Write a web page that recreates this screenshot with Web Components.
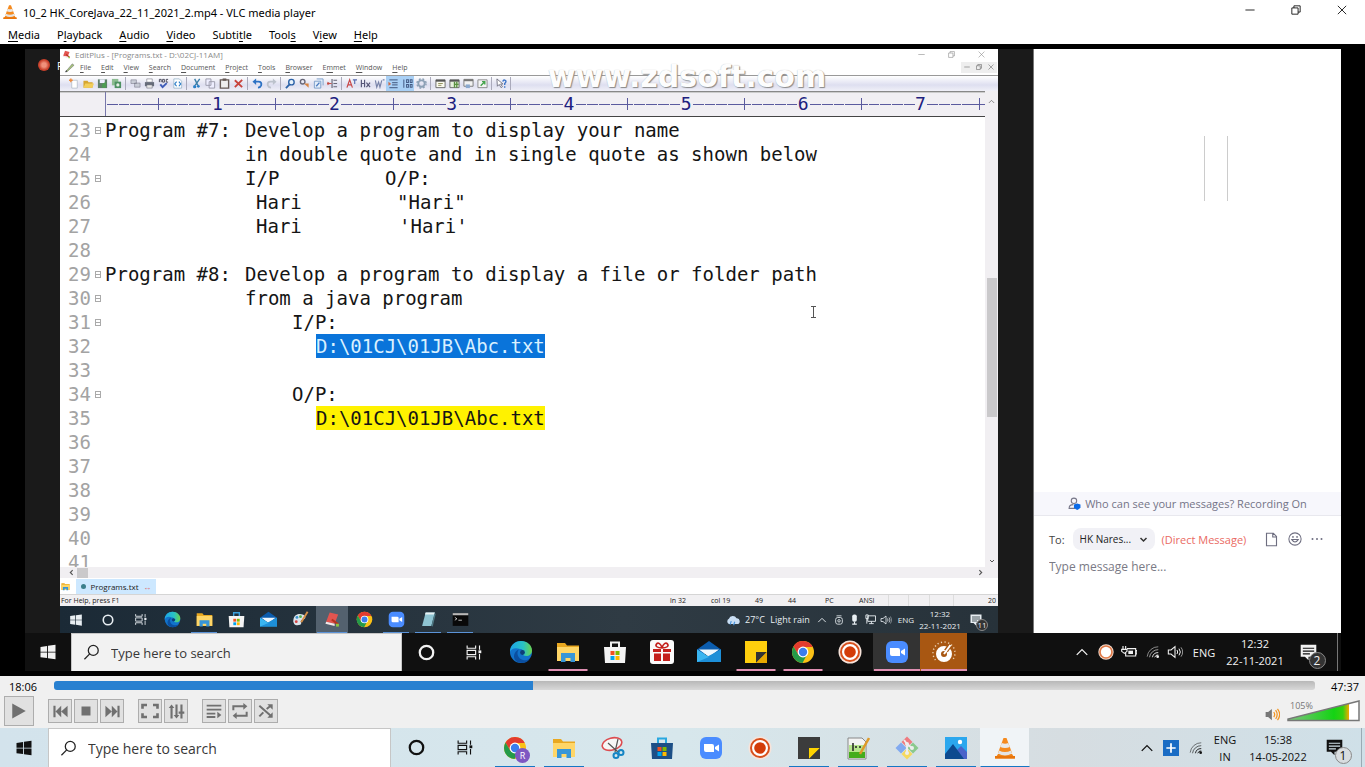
<!DOCTYPE html>
<html lang="en">
<head>
<meta charset="utf-8">
<title>10_2 HK_CoreJava_22_11_2021_2.mp4 - VLC media player</title>
<style>
html,body{margin:0;height:100%}
body{font-family:"Open Sans","Noto Sans",sans-serif;font-size:11px;color:#000;background:#fff;overflow:hidden}
</style>
</head>
<body>
<player-window></player-window>
<script>
const ICONS = {
cone:`<path d="M5 18h14l3 4.500H2z" fill="#f08418"/><path d="M5 17 10.500 2h3L19 17q-7 4-14 0z" fill="#f58a1e"/><path d="m8.800 7-1.600 4q5 2 9.600 0l-1.600-4q-3 1.500-6.400 0z" fill="#e9e9e9"/><path d="m6 14.500-1 3q7 4 14 0l-1-3q-6 3-12 0z" fill="#e4e4e4"/><path d="M2 20h20v2.500H2z" fill="#e8750c"/>`,
win:`<path d="M2 5.200 10.800 4v7.500H2zM12 3.800 22 2.400v9.100H12zM2 12.600h8.800v7.500L2 18.900zM12 12.600h10v9.100l-10-1.400z" fill="currentColor"/>`,
search:`<g fill="none" stroke="currentColor" stroke-width="1.800"><circle cx="14.500" cy="9" r="7"/><path d="M9.500 14 2 21.500"/></g>`,
ring:`<circle cx="12" cy="12" r="9.500" fill="none" stroke="currentColor" stroke-width="3.200"/>`,
task:`<g fill="none" stroke="currentColor" stroke-width="1.600"><path d="M3 2v4h12V2M3 22v-4h12v4M3 9h12v6H3zM20.500 2v6M20.500 14v8"/></g><path d="M19 9h4v4h-4z" fill="currentColor"/>`,
edge:`<defs><linearGradient id="a" x1="0" x2="1"><stop stop-color="#1ca4e8"/><stop offset=".6" stop-color="#29c3c4"/><stop offset="1" stop-color="#6cd34a"/></linearGradient></defs><circle cx="12" cy="12" r="11" fill="#1273cb"/><path d="M1 12C1 5 6 1 12 1s11 4 11 9.500c0 3.600-3 5.500-5.500 5.500-3 0-4-1-3.500-2.500.8-1.800.6-4.500-3-4.500C6 7 2 9 1 12z" fill="url(#a)"/><path d="M10 9.500c-3 3-1.500 9 4 10.500 2.500.7 5 0 7-1.500-3 5-9 5.500-13.500 3C3 18 5 11 10 9.500z" fill="#0b4fa0"/><circle cx="13.500" cy="12.500" r="2.400" fill="#0d3f78"/>`,
folder:`<path d="M1 3h8l2 2.500h12V21H1z" fill="#e9a820"/><path d="M1 7h22v14H1z" fill="#ffd667"/><path d="M5 13h14v9h-4.500v-4h-5v4H5z" fill="#3896d8"/>`,
store:`<path d="M8 7V2.500h8V7" fill="none" stroke="var(--store-h,#eee)" stroke-width="2"/><path d="M1 7h22l-1 16H2z" fill="var(--store,#f4f4f4)"/><path d="M7.500 11h4v4h-4z" fill="#f25022"/><path d="M12.500 11h4v4h-4z" fill="#7fba00"/><path d="M7.500 16h4v4h-4z" fill="#00a4ef"/><path d="M12.500 16h4v4h-4z" fill="#ffb900"/>`,
gift:`<rect x="0" y="0" width="24" height="24" rx="3" fill="#fafafa"/><path d="M3 9h8v3H3zM13 9h8v3h-8zM4 13.500h7V21H4zM13 13.500h7V21h-7z" fill="#c4201c"/><path d="M12 8C7 8 5 6 6.500 4S11 3.500 12 8c1-4.500 4-6 5.500-4S17 8 12 8z" fill="none" stroke="#c4201c" stroke-width="1.600"/>`,
mail:`<path d="M0 9.500 12 1l12 8.500V14H0z" fill="#0b5cad"/><path d="M2 9.500h20L12 17z" fill="#eef7fd"/><path d="M0 9.500 12 17l12-7.500V22H0z" fill="#29a5e6"/><path d="M24 9.500V22H0z" fill="#1d8fd8"/><path d="M0 9.500 12 17l-12 5z" fill="#3ab5f0"/>`,
note:`<path d="M1 1h22v22H1z" fill="var(--note,#ffcf0d)"/><path d="M12 12h11L12 23z" fill="var(--fold,#333)"/><path d="M23 12 12 23h11z" fill="var(--corner,#e8a800)"/>`,
chrome:`<circle cx="12" cy="12" r="11" fill="#fbc116"/><path d="M12 7h9.700A11 11 0 0 0 2.500 6.500L7.500 15z" fill="#e33b2e"/><path d="M2.500 6.500A11 11 0 0 0 11.500 23l4.500-8.500-8.500.5z" fill="#249a49"/><circle cx="12" cy="12" r="5.400" fill="#fff"/><circle cx="12" cy="12" r="4.200" fill="#3b7ded"/>`,
record:`<circle cx="12" cy="12" r="11.500" fill="#f7e3da"/><circle cx="12" cy="12" r="9" fill="#fff" stroke="#d8501c" stroke-width="2"/><circle cx="12" cy="12" r="5.800" fill="#d33c08"/>`,
recdot:`<circle cx="12" cy="12" r="11.500" fill="#f4ddd0"/><circle cx="12" cy="12" r="9" fill="#fff" stroke="#e07a48" stroke-width="2.500"/>`,
zoom:`<rect x="1" y="1" width="22" height="22" rx="6" fill="#4a8cff"/><path d="M5 8h8q2 0 2 2v6H7q-2 0-2-2zM16 11l4-2.500v7L16 13z" fill="#fff"/>`,
gauge:`<circle cx="12" cy="14" r="5.500" fill="none" stroke="#fff" stroke-width="5"/><path d="m14 11 4.500-6.500" stroke="#a85712" stroke-width="4.500"/><path d="m12 14 6.500-9" stroke="#fff" stroke-width="2"/><path d="M3.500 20A11 11 0 1 1 20.500 20" fill="none" stroke="#ecd3b6" stroke-width="1.400" stroke-dasharray="1.200 2.400"/>`,
snip:`<ellipse cx="11" cy="8" rx="10" ry="6" transform="rotate(-15 11 8)" fill="#f6f6f6" stroke="#dd4c50" stroke-width="1.600"/><path d="m7 7 10 9M17 3l-3 13" stroke="#555" stroke-width="1.200"/><g fill="none" stroke="#1585c4" stroke-width="2"><circle cx="15" cy="19.500" r="2.500"/><circle cx="20" cy="16.500" r="2.500"/></g>`,
notepp:`<path d="M2 2h14l4 4v17H2z" fill="#f3f3f3" stroke="#888"/><path d="M3 9h16v13H3z" fill="#b6e58c"/><path d="M3 16h16v6H3z" fill="#43ad1c"/><path d="M7 7v8M10 10v2M14 10v2" stroke="#222" stroke-width="1.500"/><path d="M23 2 14 18" stroke="#de9a29" stroke-width="2.500"/>`,
git:`<path d="m12 .5 5.500 5.500L12 11.500 6.500 6z" fill="#ef7b80"/><path d="M6 6.500 11.500 12 6 17.500.5 12z" fill="#82aaf0"/><path d="m18 6.500 5.500 5.500-5.500 5.500L12.500 12z" fill="#8bc98d"/><path d="m12 12.500 5.500 5.500-5.500 5.500L6.500 18z" fill="#f6d95f"/><path d="M9 4l3 4v9M12 8l5 4" stroke="#eee" stroke-width="2" fill="none"/><circle cx="12" cy="17" r="2" fill="#eee"/><circle cx="17" cy="12" r="2" fill="#eee"/><circle cx="12" cy="8" r="2" fill="#eee"/>`,
photos:`<path d="M1 1h22v22H1z" fill="#2ba7ee"/><path d="m12 15 5-5 6 6v7H12z" fill="#4a63c9"/><path d="m1 18 8-10 11 15H1z" fill="#0d4a8f"/><circle cx="16" cy="6" r="2.200" fill="#fff"/>`,
paint:`<path d="M2 12C3 5 10 3 15 5s5 6 1 7-4 2-3 5-8 5-10 1-1-4-1-6z" fill="#dbe3ea"/><circle cx="7" cy="9" r="2" fill="#3b94d1"/><circle cx="12" cy="8" r="2" fill="#4bae50"/><circle cx="6" cy="15" r="2" fill="#d74545"/><path d="m22 1-9 15" stroke="#d79047" stroke-width="2.600"/>`,
editplus:`<path d="M8 2 20 5l-5 13L3 15z" fill="#e25550"/><path d="m3 15 12 3v3L2 18z" fill="#f3e8e8"/><path d="m11 12 9 7" stroke="#b7321f" stroke-width="3"/><path d="M17 18h4v4h-4z" fill="#8cc63f"/>`,
notepad:`<path d="M8 2h13l-5 19H3z" fill="#8fc4d2"/><path d="M8 2h13l-1 3H7z" fill="#e9f2f4"/><path d="m16 21 5-19 1 3-4 17z" fill="#507b86"/>`,
cmd:`<path d="M1 3h22v18H1z" fill="#090909"/><path d="M1 3h22v3H1z" fill="#b9b9b9"/><path d="m4 9 3 2-3 2M9 13h5" stroke="#fff" fill="none"/>`,
up:`<path d="m3 17 9-9 9 9" fill="none" stroke="currentColor" stroke-width="2.200"/>`,
chev:`<path d="m4 8 8 8 8-8" fill="none" stroke="currentColor" stroke-width="4"/>`,
lt:`<path d="m16 4-8 8 8 8" fill="none" stroke="currentColor" stroke-width="4"/>`,
gt:`<path d="m8 4 8 8-8 8" fill="none" stroke="currentColor" stroke-width="4"/>`,
plus:`<path d="M0 0h24v24H0z" fill="#1a6cc4"/><path d="M12 5v14M5 12h14" stroke="#fff" stroke-width="2.600"/>`,
wifi:`<g fill="none" stroke="currentColor" stroke-width="1.500"><path d="M2 20A19 19 0 0 1 21 3" opacity=".6"/><path d="M6 21A15 15 0 0 1 21 8" opacity=".7"/><path d="M11 21a10 10 0 0 1 10-8"/><path d="M15 21a6 6 0 0 1 6-4"/></g><circle cx="20" cy="20" r="2.300" fill="currentColor"/>`,
vol:`<path d="M2 9h4l6-5v16l-6-5H2z" fill="none" stroke="currentColor" stroke-width="1.600"/><g fill="none" stroke="currentColor" stroke-width="1.500"><path d="M15 9q2 3 0 6M18 7q4 5 0 10"/><path d="M21 5q5 7 0 14" opacity=".6"/></g>`,
bat:`<path d="M9 7h13v11H7v-5M22 10h2v5h-2M3 3v5M7 3v5M1 8h8v3l-4 3-4-3z" fill="none" stroke="currentColor" stroke-width="1.700"/><path d="M11 10h7v5h-7z" fill="currentColor"/>`,
msg:`<path d="M1 1h22v17H12v5l-5-5H1z" fill="currentColor"/><path d="M4 6h16M4 10h16M4 14h10" stroke="var(--bar)" stroke-width="1.600"/>`,
cloud:`<path d="M5 19a5 5 0 0 1 0-9 7 7 0 0 1 13-1 5 5 0 0 1 1 10z" fill="#c9def4"/><path d="m9 14-2 6M15 15l-2 6" stroke="#4693de" stroke-width="2"/>`,
cam:`<rect x="4" y="6" width="16" height="16" rx="5" fill="none" stroke="currentColor" stroke-width="2"/><circle cx="12" cy="14" r="3" fill="none" stroke="currentColor" stroke-width="2"/><path d="M6 2h12" stroke="currentColor" stroke-width="2"/>`,
mic:`<rect x="7" y="1" width="10" height="16" rx="4" fill="currentColor"/><path d="M12 17v4M7 22h10" stroke="currentColor" stroke-width="2.500"/>`,
net:`<path d="M6 4h17v12H6zM14 16v5M9 21h10M2 2v8h5V2zM4 10v11" fill="none" stroke="currentColor" stroke-width="2"/>`,
play:`<path d="M3 2v20l18-10z" fill="currentColor"/>`,
prev:`<path d="M2 4h3v16H2zM13 4v16L5 12zM22 4v16l-9-8z" fill="currentColor"/>`,
next:`<path d="M19 4h3v16h-3zM11 4v16l8-8zM2 4v16l9-8z" fill="currentColor"/>`,
stop:`<path d="M3 3h18v18H3z" fill="currentColor"/>`,
full:`<path d="M2 9V4h6M16 4h6v5M22 15v5h-6M8 20H2v-5" fill="none" stroke="currentColor" stroke-width="3.500"/>`,
eq:`<path d="M5 6v16M12 2v16M19 2v20" stroke="currentColor" stroke-width="3"/><path d="M1 7h8L5 2zM8 17h8l-4 5zM15 12h8v3h-8z" fill="currentColor"/>`,
list:`<path d="M1 4h22M1 10h22M1 16h13M1 21h13" stroke="currentColor" stroke-width="2.800"/><path d="M17 13v10l6-5z" fill="currentColor"/>`,
loop:`<path d="M2 11V5h16M22 13v6H6" fill="none" stroke="currentColor" stroke-width="3"/><path d="M17 0v10l6-5zM7 14v10l-6-5z" fill="currentColor"/>`,
rand:`<path d="M2 4 20 20M2 20 8 14M13 9l6-5" stroke="currentColor" stroke-width="3"/><path d="M14 2h8v8zM22 14v8h-8z" fill="currentColor"/>`,
speaker:`<path d="M1 8h4l6-5v18l-6-5H1z" fill="#777"/><path d="M14 8q3 4 0 8M17 5q5 7 0 14M20 3q7 9 0 18" fill="none" stroke="#f29422" stroke-width="2"/>`,
min:`<path d="M1 12h22" stroke="currentColor" stroke-width="2"/>`,
max:`<path d="M2 7h15v15H2zM7 7V2h15v15h-5" fill="none" stroke="currentColor" stroke-width="2"/>`,
close:`<path d="m2 2 20 20M22 2 2 22" stroke="currentColor" stroke-width="2"/>`,
person:`<g fill="none" stroke="#777789" stroke-width="2"><circle cx="11" cy="7" r="5"/><path d="M13 21H2q0-7 8-7"/></g><path d="m17 12 6 2v5q-1 3-6 5-5-2-6-5v-5z" fill="#0b6be8"/>`,
file:`<path d="M4 2h11l5 5v15H4zM14 2v6h6" fill="none" stroke="#6e6e80" stroke-width="1.800"/>`,
smile:`<g fill="none" stroke="#6e6e80" stroke-width="1.800"><circle cx="12" cy="12" r="10.500"/><path d="M6.500 13q5.500 8 11 0z"/></g><circle cx="8.500" cy="8.500" r="1.500" fill="#6e6e80"/><circle cx="15.500" cy="8.500" r="1.500" fill="#6e6e80"/>`,
dots:`<g fill="#6e6e80"><circle cx="3" cy="12" r="2"/><circle cx="12" cy="12" r="2"/><circle cx="21" cy="12" r="2"/></g>`,
pencil:`<path d="M3 22 18 4l4 3L7 21z" fill="#a8c47a" stroke="#667"/><path d="m3 22 2-5 2 4z" fill="#444"/>`,
tNew:`<path d="M6 5h12v17H6z" fill="#fff" stroke="#89a"/><path d="M4 1v8M0 5h8" stroke="#f08a3c" stroke-width="3"/>`,
tOpen:`<path d="M1 6h9l2 3h9v12H1z" fill="#d6a631"/><path d="M5 12h19l-4 9H1z" fill="#f2ce5b"/>`,
tSave:`<path d="M2 3h20v19H2z" fill="#5f7f6a"/><path d="M6 3h11v8H6z" fill="#eef"/><path d="m11 13 9-5v13h-9z" fill="#4d9c54"/>`,
tSaves:`<path d="M2 2h14v14H2z" fill="#8cbd92"/><path d="M8 8h14v14H8z" fill="#4d9162"/><circle cx="15" cy="15" r="3.500" fill="#e4efe6"/>`,
tPrev:`<path d="M2 4h12v8H2zM10 11h12v9H10z" fill="#c8ccd6" stroke="#667"/>`,
tPrint:`<path d="M6 2h12v7H6z" fill="#fff" stroke="#556"/><path d="M2 9h20v9H2z" fill="#666c7a"/><path d="M6 15h12v7H6z" fill="#e8e8e8" stroke="#556"/>`,
tSpell:`<path d="M3 9V3h4v6M10 3h4v6h-4zM22 3h-4v6h4" fill="none" stroke="#445" stroke-width="2"/><path d="m5 14 5 6 9-9" fill="none" stroke="#3d5bb8" stroke-width="4"/>`,
tCode:`<path d="M4 2h12l5 5v15H4z" fill="#fff" stroke="#58a"/><path d="m10 8-4 5 4 5M15 8l4 5-4 5" fill="none" stroke="#2c7dc8" stroke-width="2.500"/>`,
tCut:`<path d="m8 2 7 14M19 2 9 16" stroke="#3a7ea8" stroke-width="3"/><circle cx="8" cy="19" r="3.500" fill="#2a7fc6"/><circle cx="16" cy="18" r="3" fill="#2a7fc6"/>`,
tCopy:`<path d="M2 2h11v14H2zM9 8h12v14H9z" fill="#eef" stroke="#99a" stroke-width="2"/>`,
tPaste:`<path d="M3 4h18v18H3z" fill="#eee" stroke="#665a55" stroke-width="3"/><path d="M8 1h8v5H8z" fill="#665a55"/>`,
tDel:`<path d="m4 5 16 15M20 4 4 20" stroke="#c8433c" stroke-width="4"/>`,
tUndo:`<path d="M6 8h8q8 0 6 8-2 5-7 5" fill="none" stroke="#2d72c4" stroke-width="4"/><path d="M1 8 9 1v14z" fill="#2d72c4"/>`,
tRedo:`<path d="M18 8h-8q-8 0-6 8 2 5 7 5" fill="none" stroke="#bcc2cc" stroke-width="4"/><path d="m23 8-8-7v14z" fill="#bcc2cc"/>`,
tFind:`<circle cx="14" cy="9" r="6" fill="#e6f1fb" stroke="#2c62a8" stroke-width="3"/><path d="m10 14-8 8" stroke="#2c62a8" stroke-width="4"/>`,
tRep:`<circle cx="8" cy="8" r="5" fill="none" stroke="#667" stroke-width="3"/><path d="m11 12 10 9v-9z" fill="#d88340"/>`,
tGoto:`<path d="M3 7h14v15H3zM8 2h14v14" fill="#e4eefa" stroke="#7a9cc8" stroke-width="2"/><path d="m7 18 7-8" stroke="#4b7ac0" stroke-width="3"/>`,
tCol:`<path d="M11 2v20M14 5h8M14 12h8M14 19h8" stroke="#667" stroke-width="2.500"/><path d="M1 8v8l7-4z" fill="#c64b44"/><path d="M0 12h10" stroke="#c64b44" stroke-width="2"/>`,
tFont:`<path d="M2 21 8 4l6 17M5 15h7" fill="none" stroke="#c84545" stroke-width="2.500"/><path d="M15 4h9M19 4v9" stroke="#566bb0" stroke-width="2.500"/>`,
tHex:`<path d="M3 4v16M10 4v16M3 12h7M14 10l8 10M22 10l-8 10" stroke="#557" stroke-width="2.500"/>`,
tWrap:`<path d="m3 5 3 15 4-11 3 11 4-15M19 4h4" fill="none" stroke="#7782a8" stroke-width="2.500"/>`,
tInd:`<path d="M3 4h18M9 10h12M9 15h12M3 21h18" stroke="#556f96" stroke-width="2.500"/><path d="M1 8v9l6-4z" fill="#cf6842"/>`,
tNum:`<path d="M4 3v18M10 4h4v6h-4zM18 4h4v6h-4zM10 14h4v6h-4zM18 14h4v6h-4z" fill="none" stroke="#445b85" stroke-width="2.200"/>`,
tGear:`<circle cx="12" cy="12" r="7" fill="none" stroke="#8ca0b5" stroke-width="4"/><circle cx="12" cy="12" r="10" fill="none" stroke="#8ca0b5" stroke-width="3" stroke-dasharray="4 4"/>`,
tWinA:`<path d="M2 4h20v17H2z" fill="#fafaf0" stroke="#666" stroke-width="2"/><path d="M2 4h20v4H2z" fill="#555"/><path d="M7 12h10M7 16h7" stroke="#8a8a55" stroke-width="2"/>`,
tWinB:`<path d="M2 4h20v17H2z" fill="#e5f1dc" stroke="#666" stroke-width="2"/><path d="M2 4h20v4H2z" fill="#555"/><path d="M12 8v13M17 8v13M13 14h8" stroke="#59913f" stroke-width="3"/>`,
tWinC:`<path d="M2 3h20v15H2z" fill="#f2f2f2" stroke="#777" stroke-width="2"/><path d="M2 3h20v4H2z" fill="#777"/><path d="M6 14h9v8H6z" fill="#8aa9cf"/>`,
tWinD:`<path d="M2 4h20v17H2z" fill="#f4f4f4" stroke="#888" stroke-width="2"/><path d="m8 17 9-9M17 14V8h-6" stroke="#43a34b" stroke-width="3" fill="none"/>`,
tHelp:`<path d="m2 2 1 16 4-4 4 7 3-2-4-6h5z" fill="#fff" stroke="#667" stroke-width="1.800"/><path d="M15 8q1-5 5-3t-1 7v3M19 18v3" fill="none" stroke="#3d74c7" stroke-width="3"/>`
};

class Base extends HTMLElement {
  constructor(){ super(); this.attachShadow({mode:"open"}); }
  connectedCallback(){ this.shadowRoot.innerHTML = `<style>*{box-sizing:border-box}button,input,select{font:inherit;color:inherit;margin:0;padding:0;border:0;background:none;outline:0}${this.css()}</style>${this.html()}`; }
  a(n,d=""){ return this.getAttribute(n) ?? d; }
}
const def = (n,c)=>customElements.define(n,c);

def("ui-icon", class extends Base {
  css(){ const s=this.a("size","16"); return `:host{display:block;flex:none;width:${s}px;height:${s}px}svg{display:block;width:100%;height:100%}`; }
  html(){ return `<svg viewBox="0 0 24 24" aria-hidden="true">${ICONS[this.a("name")]}</svg>`; }
});

/* Menu with underlined access keys: "_" precedes the key letter */
def("menu-bar", class extends Base {
  css(){ return `:host{display:block}nav{display:flex;align-items:center;gap:var(--menu-gap);height:100%}button{line-height:1;white-space:nowrap}u{text-underline-offset:2px}`; }
  html(){ return `<nav>${this.a("items").split(",").map(t=>`<button>${t.replace(/_(.)/,"<u>$1</u>")}</button>`).join("")}</nav>`; }
});

def("win-controls", class extends Base {
  css(){ return `:host{display:flex}button{width:var(--cw,46px);height:100%;display:grid;place-items:center}`; }
  html(){ const s=this.a("size","10"); return ["min","max","close"].map(n=>`<button aria-label="${n}"><ui-icon name="${n}" size="${s}"></ui-icon></button>`).join(""); }
});

def("task-item", class extends Base {
  css(){ const u=this.a("line"), w=this.a("w","48"); return `:host{display:block;flex:none;width:${w}px;height:100%}
button{width:100%;height:100%;display:grid;place-items:center;position:relative;background:${this.a("bg","none")}}
i{position:absolute;bottom:0;left:50%;height:var(--lh,2px);width:${u||0}px;transform:translateX(-50%);background:var(--line)}
b{position:absolute;right:9px;bottom:4px;width:15px;height:15px;border-radius:50%;background:#7e57c2;color:#fff;font:9px/15px "Open Sans",sans-serif;text-align:center}`; }
  html(){ return `<button aria-label="${this.a("icon")}"><ui-icon name="${this.a("icon")}" size="${this.a("size","24")}"></ui-icon>${this.a("badge")?`<b>${this.a("badge")}</b>`:""}<i></i></button>`; }
});

def("search-box", class extends Base {
  css(){ return `:host{display:block;flex:none}label{display:flex;align-items:center;gap:11px;height:100%;padding-left:11px;background:var(--sb);border:1px solid #c6c6c6;border-bottom:0}input{flex:1;min-width:0;font-size:var(--st,13px);color:#333}input::placeholder{color:#383838;opacity:1}ui-icon{color:#222}`; }
  html(){ return `<label><ui-icon name="search" size="17"></ui-icon><input aria-label="Search" placeholder="Type here to search"></label>`; }
});

def("tray-cell", class extends Base {
  css(){ return `:host{display:flex;flex:none;flex-direction:column;align-items:center;justify-content:center;width:${this.a("w")}px;height:100%;text-align:center;white-space:nowrap;line-height:var(--tl,17px);position:relative}`; }
  html(){ return `<slot></slot>`; }
});

def("note-badge", class extends Base {
  css(){ const s=+this.a("size","20"), b=+this.a("b","17"), f=this.a("f","12"); return `:host{display:block;position:relative;width:${s+8}px;height:${s}px}b{position:absolute;left:${Math.round(s/2)}px;top:${Math.round(s/2)-1}px;width:${b}px;height:${b}px;border-radius:50%;background:var(--bb);border:1px solid #888;font-weight:400;font-size:${f}px;line-height:${b-2}px;text-align:center}`; }
  html(){ return `<ui-icon name="msg" size="${this.a("size","20")}"></ui-icon><b>${this.a("n")}</b>`; }
});

def("code-line", class extends Base {
  css(){ return `:host{display:grid;grid-template-columns:45px 140px 140px 1fr;height:24px;line-height:24px;white-space:pre}
.n{color:#a3a3a3;padding-left:8px;display:flex;align-items:center;gap:4px}
.n i{width:6px;height:7px;border:1px solid #aaa;background:linear-gradient(#aaa,#aaa) center/100% 1px no-repeat;flex:none}
.t{overflow:visible;width:0}mark{color:inherit;background:#fff200;display:inline-block}mark.sel{background:#0a74da;color:#d9f0ff}`; }
  html(){
    const p=(this.a("cols")||"").split("|");
    return `<span class="n">${this.a("n")}${this.hasAttribute("fold")?"<i></i>":""}</span>`+p.map(c=>{
      const m=c.match(/^(\d*)(~|\^)?(.*)$/); const pad=m[1]||0;
      const tx=m[2]?`<mark class="${m[2]=="^"?"sel":""}">${m[3]}</mark>`:m[3];
      return `<span class="t" style="padding-left:${pad}px">${tx}</span>`;}).join("");
  }
});

def("ruler-bar", class extends Base {
  css(){ return `:host{display:flex;height:26px;background:#f1eff3;border-top:1px solid #888;border-bottom:1px solid #444;font:18px "DejaVu Sans Mono",monospace;color:#20207e;padding:0 0 0 45px;box-shadow:inset 0 1px #ccc}
ol{flex:1;margin:0;padding:0;list-style:none;display:flex;border-left:1px solid #77a}
li{flex:1 1 0;min-width:0;display:flex;justify-content:center;align-items:center;line-height:24px}
.d{background:linear-gradient(#5a5a9e,#5a5a9e) 1px 12px/calc(100% - 1px) 1px no-repeat}
.p{background:linear-gradient(#5a5a9e,#5a5a9e) 0 12px/100% 1px no-repeat,linear-gradient(#5a5a9e,#5a5a9e) center/1px 12px no-repeat}`; }
  html(){ let s=""; for(let i=1;i<=75;i++) s+= i%10==0?`<li>${i/10}</li>`:`<li class="${i%5?"d":"p"}"></li>`; return `<ol>${s}</ol>`; }
});

def("tool-strip", class extends Base {
  css(){ return `:host{display:flex;align-items:center;height:16px;padding-left:7px;background:linear-gradient(#fff,#dedff0 60%,#f0f0f8);border-top:1px solid #999}
button{width:14px;height:15px;display:grid;place-items:center;flex:none}button.on{background:#a9d0f5}hr{margin:0 2px;border:0;width:1px;height:13px;background:#aab;flex:none}`; }
  html(){ return "tNew tOpen tSave tSaves | tPrev tPrint tSpell tCode | tCut tCopy tPaste tDel | tUndo tRedo | tFind tRep tGoto tCol | tFont tHex tWrap *tInd *tNum tGear | tWinA tWinB tWinC tWinD | tHelp |".split(" ").map(n=>n=="|"?"<hr>":`<button class="${n[0]=="*"?"on":""}" aria-label="${n.replace(/\*?t/,"")}"><ui-icon name="${n.replace("*","")}" size="11"></ui-icon></button>`).join(""); }
});

def("code-editor", class extends Base {
  css(){ return `:host{display:flex;flex-direction:column;min-width:0;min-height:0;background:#fff;position:relative;overflow:hidden;font-size:8px;color:#555}
.title{display:flex;align-items:center;height:10px;gap:4px;padding-left:2px;color:#8a8a8a;flex:none}.title span{flex:1}
.title win-controls{--cw:30px;height:10px;margin-right:2px}
.menu{display:flex;align-items:center;height:16px;padding-left:4px;gap:5px;font-size:7px;color:#555;flex:none}
.menu menu-bar{flex:1;--menu-gap:10px}.menu win-controls{--cw:12px;background:#eee;height:11px;margin-right:1px}
tool-strip{flex:none}
.body{flex:1;min-height:0;display:grid;grid-template-columns:1fr 13px;grid-template-rows:auto minmax(0,1fr) 11px}
.code{overflow:hidden;font:19px/24px "DejaVu Sans Mono",monospace;color:#151515;padding-top:1px}
.vs{grid-column:2;grid-row:1/3;background:#f1eff2;display:flex;flex-direction:column;align-items:center;padding:7px 0 3px;color:#555}
.vs i{flex:none;width:10px;height:139px;margin:173px 0 auto;background:#cac9cb}
.hs{grid-column:1/3;background:#f1eff2;display:flex;align-items:center;justify-content:space-between;padding:0 14px 0 8px;color:#555}
.hs div{display:flex;align-items:center;gap:2px}.hs i{width:11px;height:10px;background:#cac9cb}
.tabs{height:16px;display:flex;align-items:center;gap:6px;padding-left:1px;flex:none}
.tabs button{height:15px;width:80px;background:#cde8ff;display:flex;align-items:center;justify-content:space-evenly;color:#222}.tabs em{color:#d66;font-style:normal}.tabs s{width:5px;height:5px;border-radius:50%;background:#3b7f8c;display:block}
.status{flex:none;height:12px;border-top:1px solid #d5d5d5;background:#f1f0f2;display:grid;grid-template-columns:1fr 41px 44px 33px 37px 34px 32px 20px 21px 24px 32px 12px;align-items:center;color:#222;font-size:7px;line-height:11px;padding-left:1px;white-space:nowrap}
.status span+span{padding-left:2px}.status .k{border-right:1px solid #ddd;height:100%}
.wm{position:absolute;left:52%;top:10px;font:bold 30px/35px "DejaVu Sans",sans-serif;color:#fdfdfd;text-shadow:1px 1px 1px #888,0 0 1px #bbb}
.cur{position:absolute;left:80%;top:257px;width:7px;height:12px}
.bar{flex:none;display:flex;align-items:center;height:27px;background:linear-gradient(90deg,#1b2a36,#2f3b44 60%,#27323a);color:#e8eef2;--line:#5b93d8;--lh:1px;--store:#f4f4f4;--store-h:#3aa0dd;--tl:12px;--bar:#27323a;--bb:#333;font-size:8px}
.tray{display:flex;margin-left:auto;height:100%;align-items:center}.wx{font-size:9px}`; }
  html(){
    const L=[[23,1,"Program #7:|Develop a program to display your name"],[24,0,"|in double quote and in single quote as shown below"],[25,1,"|I/P|O/P:"],[26,0,"|11Hari|12&quot;Hari&quot;"],[27,0,"|11Hari|14'Hari'"],[28,0,""],[29,1,"Program #8:|Develop a program to display a file or folder path"],[30,1,"|from a java program"],[31,1,"|47I/P:"],[32,0,"|71^D:\\01CJ\\01JB\\Abc.txt"],[33,0,""],[34,1,"|47O/P:"],[35,0,"|71~D:\\01CJ\\01JB\\Abc.txt"],[36,0,""],[37,0,""],[38,0,""],[39,0,""],[40,0,""],[41,0,""]];
    const apps=["win:","ring:","task:","edge:","folder:26","store:","mail:","paint:","editplus:30:#53616e","chrome:","zoom:26","notepad:26","cmd:26"];
    return `<div class="title"><ui-icon name="editplus" size="9"></ui-icon><span>EditPlus - [Programs.txt - D:\\02CJ-11AM]</span><win-controls size="7"></win-controls></div>
<div class="menu"><ui-icon name="pencil" size="11"></ui-icon><menu-bar items="_File,_Edit,_View,_Search,_Document,_Project,_Tools,_Browser,E_mmet,_Window,_Help"></menu-bar><win-controls size="6"></win-controls></div>
<tool-strip></tool-strip>
<div class="body"><ruler-bar></ruler-bar><div class="code">${L.map(l=>`<code-line n="${l[0]}" ${l[1]?"fold":""} cols="${l[2]}"></code-line>`).join("")}</div>
<div class="vs"><ui-icon name="up" size="7"></ui-icon><i></i><ui-icon name="chev" size="6"></ui-icon></div>
<div class="hs"><div><ui-icon name="lt" size="7"></ui-icon><i></i></div><ui-icon name="gt" size="7"></ui-icon></div></div>
<div class="tabs"><ui-icon name="folder" size="9"></ui-icon><button><s></s>Programs.txt<em>↔</em></button></div>
<div class="status"><span>For Help, press F1</span><span>ln 32</span><span>col 19</span><span>49</span><span>44</span><span>PC</span><span class="k">ANSI</span><span class="k"></span><span class="k"></span><span class="k"></span><span></span><span>20</span></div>
<div class="bar">${apps.map(x=>{const[n,l,b]=x.split(":");const s={win:14,ring:12,task:13}[n]||17;return `<task-item w="32" size="${s}" icon="${n}" ${l?`line="${l}"`:""} ${b?`bg="${b}"`:""}></task-item>`}).join("")}
<div class="tray"><tray-cell w="18"><ui-icon name="cloud" size="14"></ui-icon></tray-cell><tray-cell w="26" class="wx">27°C</tray-cell><tray-cell w="44" class="wx">Light rain</tray-cell><tray-cell w="20"><ui-icon name="up" size="10"></ui-icon></tray-cell><tray-cell w="14"><ui-icon name="cam" size="10"></ui-icon></tray-cell><tray-cell w="16"><ui-icon name="mic" size="11"></ui-icon></tray-cell><tray-cell w="16"><ui-icon name="net" size="11"></ui-icon></tray-cell><tray-cell w="16"><ui-icon name="vol" size="12"></ui-icon></tray-cell><tray-cell w="24">ENG</tray-cell><tray-cell w="44"><span>12:32</span><span>22-11-2021</span></tray-cell><tray-cell w="36"><note-badge size="12" b="12" f="8" n="11"></note-badge></tray-cell></div></div>
<div class="wm">www.zdsoft.com</div>
<svg class="cur" viewBox="0 0 7 12"><path d="M1 .5h5M3.500 0v12M1 11.500h5" stroke="#555" fill="none"/></svg>`;
  }
});

def("chat-panel", class extends Base {
  css(){ return `:host{display:flex;flex-direction:column;background:#fff;border-left:1px solid #777;min-width:0;font-size:11px}
.caret{width:24px;height:65px;margin:87px 0 auto 170px;border:solid #ccc;border-width:0 1px}
.who{display:flex;align-items:center;justify-content:center;gap:4px;height:24px;background:#f7f7fc;border-bottom:1px solid #e8e8ee;color:#747487}
.to{display:flex;align-items:center;height:22px;margin:12px 18px 0 15px;color:#444}
.pick{position:relative;display:flex;align-items:center;margin:0 7px 0 8px}
select{appearance:none;width:82px;height:22px;border-radius:8px;background:#f1f1f6;padding-left:7px;color:#222;font-size:10px}
.pick ui-icon{position:absolute;right:7px;color:#333;pointer-events:none}
.dm{color:#ea6a63;flex:1;white-space:nowrap}.acts{display:flex;align-items:center;gap:9px}
.msg{height:20px;margin:6px 16px 57px 15px;color:#555;font-size:12px}.msg::placeholder{color:#7a7a85;opacity:1}`; }
  html(){ return `<div class="caret"></div><div class="who"><ui-icon name="person" size="13"></ui-icon>Who can see your messages? Recording On</div>
<div class="to"><label for="t">To:</label><span class="pick"><select id="t"><option>HK Nares...</option></select><ui-icon name="chev" size="9"></ui-icon></span><span class="dm">(Direct Message)</span><span class="acts"><ui-icon name="file" size="15"></ui-icon><ui-icon name="smile" size="14"></ui-icon><ui-icon name="dots" size="12"></ui-icon></span></div>
<input class="msg" aria-label="Message" placeholder="Type message here...">`; }
});

def("recorded-desktop", class extends Base {
  css(){ return `:host{display:flex;flex-direction:column;flex:1;min-height:0;background:#000;padding:5px 24px 5px 25px;box-sizing:border-box}
.screen{flex:1;min-height:0;display:grid;grid-template-columns:35px 938fr 35px 308fr;grid-template-rows:minmax(0,1fr);background:#1a1a1a}
.side{display:flex;gap:7px;padding:10px 0 0 13px;color:#fff;overflow:hidden;font-size:10px;line-height:14px}.side i{flex:none;width:12px;height:12px;border-radius:50%;background:radial-gradient(#f0907a 25%,#c8402a 60%)}
code-editor{grid-column:2}chat-panel{grid-column:4}
.bar{flex:none;display:flex;height:38px;background:#101010;color:#f2f2f2;--sb:#f2f2f2;--line:#df8fb2;--bar:#101010;--bb:#333;font-size:11px}
search-box{width:331px;margin-right:1px}.gap{width:1px}
.tray{display:flex;margin-left:auto;border-right:1px solid #777;margin-right:3px}`; }
  html(){ const apps=["edge:","folder:39","store:","gift:","mail:","note:39","chrome:39","record:","zoom:46:#333","gauge:46:#a85712"];
    return `<div class="screen"><div class="side"><i></i>P</div><code-editor></code-editor><chat-panel></chat-panel></div>
<div class="bar"><task-item icon="win" w="46" size="18"></task-item><search-box></search-box><task-item icon="ring" w="47" size="17"></task-item><task-item icon="task" w="46" size="17"></task-item><span class="gap"></span>${apps.map(x=>{const[n,l,b]=x.split(":");return `<task-item w="47" size="24" icon="${n}" ${l?`line="${l}"`:""} ${b?`bg="${b}"`:""}></task-item>`}).join("")}
<div class="tray"><tray-cell w="24"><ui-icon name="up" size="14"></ui-icon></tray-cell><tray-cell w="23"><ui-icon name="recdot" size="16"></ui-icon></tray-cell><tray-cell w="24"><ui-icon name="bat" size="16"></ui-icon></tray-cell><tray-cell w="24"><ui-icon name="wifi" size="14"></ui-icon></tray-cell><tray-cell w="20"><ui-icon name="vol" size="16"></ui-icon></tray-cell><tray-cell w="38">ENG</tray-cell><tray-cell w="64"><span>12:32</span><span>22-11-2021</span></tray-cell><tray-cell w="50"><note-badge n="2" size="17"></note-badge></tray-cell></div></div>`; }
});

def("volume-control", class extends Base {
  css(){ return `:host{display:flex;align-items:flex-end;gap:7px}.v{position:relative;width:73px;height:22px}svg{width:100%;height:100%;display:block}input{position:absolute;inset:0;width:100%;opacity:0}output{position:absolute;left:3px;top:0;font-size:9px;line-height:11px;color:#777}`; }
  html(){ return `<ui-icon name="speaker" size="15"></ui-icon><div class="v"><svg viewBox="0 0 73 22"><defs><linearGradient id="g"><stop stop-color="#7fc27f"/><stop offset=".75" stop-color="#14d314"/><stop offset=".9" stop-color="#35d010"/><stop offset="1" stop-color="#f5a800"/></linearGradient></defs><path d="M1 20.500V19L72 1v19.500z" fill="#fff"/><path d="M1 20.500V19L62 3.500v17z" fill="url(#g)"/><path d="M1 20.500V19L72 1v19.500z" fill="none" stroke="#777" stroke-width="1.500"/></svg><output>105%</output><input type="range" aria-label="Volume" max="125" value="105"></div>`; }
});

def("player-controls", class extends Base {
  css(){ return `:host{display:block;flex:none;background:#f0f0f0;height:52px}
.seek{display:flex;align-items:center;height:20px;padding:0 6px 0 9px}.seek time{width:45px}.seek time+input+time{width:auto;margin-left:16px}
input{appearance:none;flex:1;min-width:0;height:9px;border-radius:3px;background:linear-gradient(90deg,#2880d0 38%,transparent 0),linear-gradient(#b8b8b8,#d8d8d8);margin-bottom:2px}
input::-webkit-slider-thumb{appearance:none;width:0}
.row{display:flex;align-items:center;height:30px;padding:0 5px 0 4px}.row button{width:24px;height:24px;border:1px solid #adadad;background:#e1e1e1;color:#707070;display:grid;place-items:center;margin-right:2px}
.row .play{width:30px;height:30px;margin-right:14px}.row .end{margin-right:14px}volume-control{margin-left:auto}`; }
  html(){ const b=(n,c="",s=17)=>`<button class="${c}" aria-label="${n}"><ui-icon name="${n}" size="${s}"></ui-icon></button>`;
    return `<div class="seek"><time>18:06</time><input type="range" aria-label="Position" value="38"><time>47:37</time></div>
<div class="row">${b("play","play",18)}${b("prev")}${b("stop","",12)}${b("next","end")}${b("full","",18)}${b("eq","end")}${b("list","",16)}${b("loop","",16)}${b("rand","",16)}<volume-control></volume-control></div>`; }
});

def("desktop-taskbar", class extends Base {
  css(){ return `:host{display:flex;flex:none;height:39px;background:linear-gradient(90deg,#d3e3ec,#d7e7ec 50%,#d6dde1 78%,#cfe0e8);color:#111;--sb:#fff;--st:14px;--line:#1577c4;--lh:1px;--bar:#d3e2e9;--bb:#d8dde0;font-size:12px}
search-box{width:343px;margin-right:1px}.gap{width:2px}.dark{--note:#3c3c3c;--fold:#ffd400;--corner:#3c3c3c}.st{--store:#1d4f86;--store-h:#29a8e0}
.tray{display:flex;margin-left:auto;border-right:1px solid #9aabb4;margin-right:3px}.clock{font-size:11px}`; }
  html(){ const apps=["chrome:40","folder:40","snip:","store:","zoom:","record:","note:40","notepp:40","git:40","photos:40","cone:49:#f0f4f7"];
    return `<task-item icon="win" size="18"></task-item><search-box></search-box><task-item icon="ring" size="17"></task-item><task-item icon="task" size="17"></task-item><span class="gap"></span>${apps.map(x=>{const[n,l,b]=x.split(":");return `<task-item class="${n=="note"?"dark":n=="store"?"st":""}" w="49" icon="${n}" ${n=="chrome"?'badge="R"':""} ${l?`line="${l}"`:""} ${b?`bg="${b}"`:""}></task-item>`}).join("")}
<div class="tray"><tray-cell w="24"><ui-icon name="up" size="14"></ui-icon></tray-cell><tray-cell w="24"><ui-icon name="plus" size="16"></ui-icon></tray-cell><tray-cell w="26"><ui-icon name="wifi" size="14"></ui-icon></tray-cell><tray-cell w="32" class="clock"><span>ENG</span><span>IN</span></tray-cell><tray-cell w="74" class="clock"><span>15:38</span><span>14-05-2022</span></tray-cell><tray-cell w="46"><note-badge n="1" size="17"></note-badge></tray-cell></div>`; }
});

def("player-window", class extends Base {
  css(){ return `:host{display:flex;flex-direction:column;height:100vh}
header{display:flex;align-items:center;height:24px;padding-left:2px;flex:none;font-family:"Noto Sans",sans-serif}header ui-icon{margin-right:5px}header span{flex:1}win-controls{height:20px;align-self:flex-start}
.menu{height:20px;padding-left:8px;--menu-gap:17px;flex:none;font-family:"Noto Sans",sans-serif;box-sizing:border-box}recorded-desktop{flex:1}`; }
  html(){ return `<header><ui-icon name="cone" size="16"></ui-icon><span>10_2 HK_CoreJava_22_11_2021_2.mp4 - VLC media player</span><win-controls size="10"></win-controls></header>
<menu-bar class="menu" items="_Media,P_layback,_Audio,_Video,Subti_tle,Tool_s,V_iew,_Help"></menu-bar>
<recorded-desktop></recorded-desktop><player-controls></player-controls><desktop-taskbar></desktop-taskbar>`; }
});
</script>
</body>
</html>
